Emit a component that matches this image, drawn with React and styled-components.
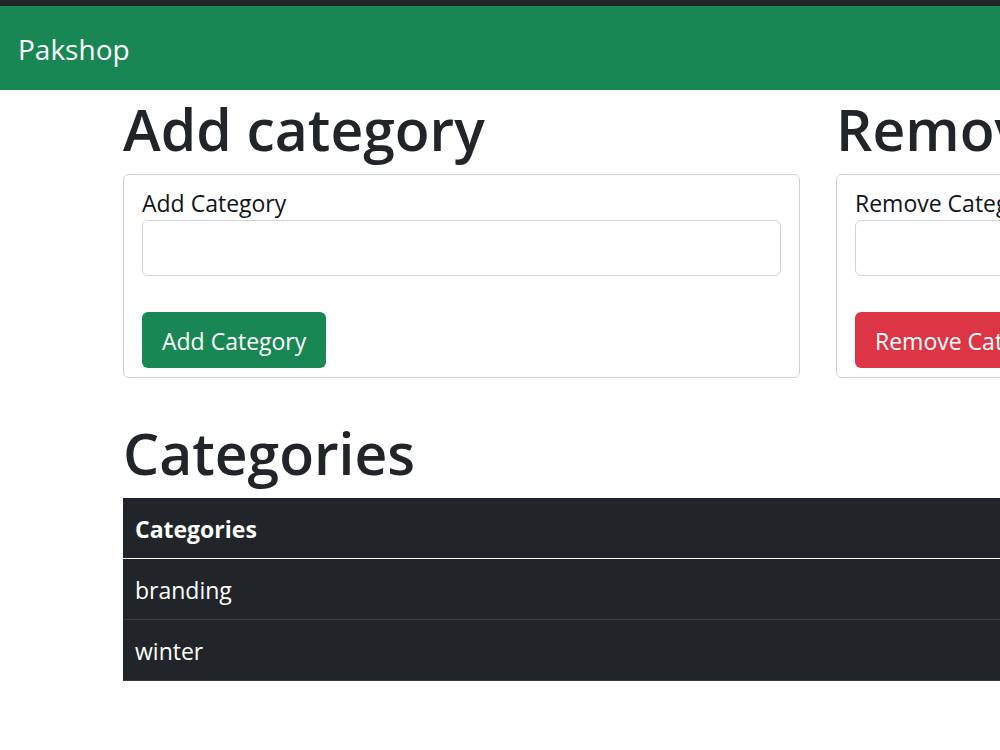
import React from "react";
import styled, { createGlobalStyle } from "styled-components";

const GlobalStyle = createGlobalStyle`
  *, *::before, *::after { box-sizing: border-box; }
  body {
    margin: 0;
    background: #fff;
    color: #212529;
    font-family: "Open Sans", "Noto Sans", sans-serif;
    font-size: 23px;
    line-height: 34px;
    overflow-x: hidden;
  }
`;

const Navbar = styled.nav`
  display: flex;
  align-items: center;
  height: 90px;
  padding: 2px 18px 0;
  background: #198754;
  border-top: 6px solid #212529;
`;

const Brand = styled.a`
  color: #fff;
  font-size: 28px;
  line-height: 48px;
  text-decoration: none;
`;

const Container = styled.main`
  width: max-content;
  min-width: 100%;
  padding: 0 123px 36px;
`;

const Forms = styled.div`
  display: grid;
  grid-template-columns: repeat(2, minmax(677px, 1fr));
  gap: 36px;
  margin-bottom: 36px;
`;

const Heading = styled.h1`
  margin: 0 0 12px;
  padding-top: 6px;
  font-size: 57px;
  font-weight: 600;
  line-height: 66px;
  white-space: nowrap;
`;

const Card = styled.form`
  display: flex;
  flex-direction: column;
  align-items: flex-start;
  padding: 9px 18px;
  border: 1px solid #ced4d6;
  border-radius: 6px;
`;

const Label = styled.label`
  padding-top: 2px;
  color: #111418;
`;

const TextInput = styled.input`
  width: 100%;
  height: 56px;
  margin-bottom: 36px;
  padding: 9px 18px;
  border: 1px solid #ced4d6;
  border-radius: 6px;
  background: #fff;
  color: inherit;
  font: inherit;
`;

const Button = styled.button`
  height: 56px;
  padding: 2px 20px 0;
  border: 0;
  border-radius: 6px;
  background: ${({ $danger }) => ($danger ? "#dc3545" : "#198754")};
  color: #fff;
  font: inherit;
  white-space: nowrap;
  cursor: pointer;
`;

const Table = styled.table`
  width: 100%;
  border-collapse: separate;
  border-spacing: 0;
  background: #212529;
  color: #fff;
`;

const HeadCell = styled.th`
  padding: 14px 12px 12px;
  border-bottom: 1px solid #fff;
  font-weight: 700;
  text-align: left;
`;

const Cell = styled.td`
  padding: 14px 12px 12px;
  border-bottom: 1px solid #373b3e;
`;

function CategoryForm({ id, title, label, danger }) {
  return (
    <section>
      <Heading>{title}</Heading>
      <Card onSubmit={(event) => event.preventDefault()}>
        <Label htmlFor={id}>{label}</Label>
        <TextInput id={id} type="text" />
        <Button type="submit" $danger={danger}>{label}</Button>
      </Card>
    </section>
  );
}

const categories = ["branding", "winter"];

export default function App() {
  return (
    <>
      <GlobalStyle />
      <Navbar>
        <Brand href="#">Pakshop</Brand>
      </Navbar>
      <Container>
        <Forms>
          <CategoryForm id="add-category" title="Add category" label="Add Category" />
          <CategoryForm id="remove-category" title="Remove category" label="Remove Category" danger />
        </Forms>
        <Heading as="h2">Categories</Heading>
        <Table>
          <thead>
            <tr><HeadCell scope="col">Categories</HeadCell></tr>
          </thead>
          <tbody>
            {categories.map((name) => (
              <tr key={name}><Cell>{name}</Cell></tr>
            ))}
          </tbody>
        </Table>
      </Container>
    </>
  );
}
